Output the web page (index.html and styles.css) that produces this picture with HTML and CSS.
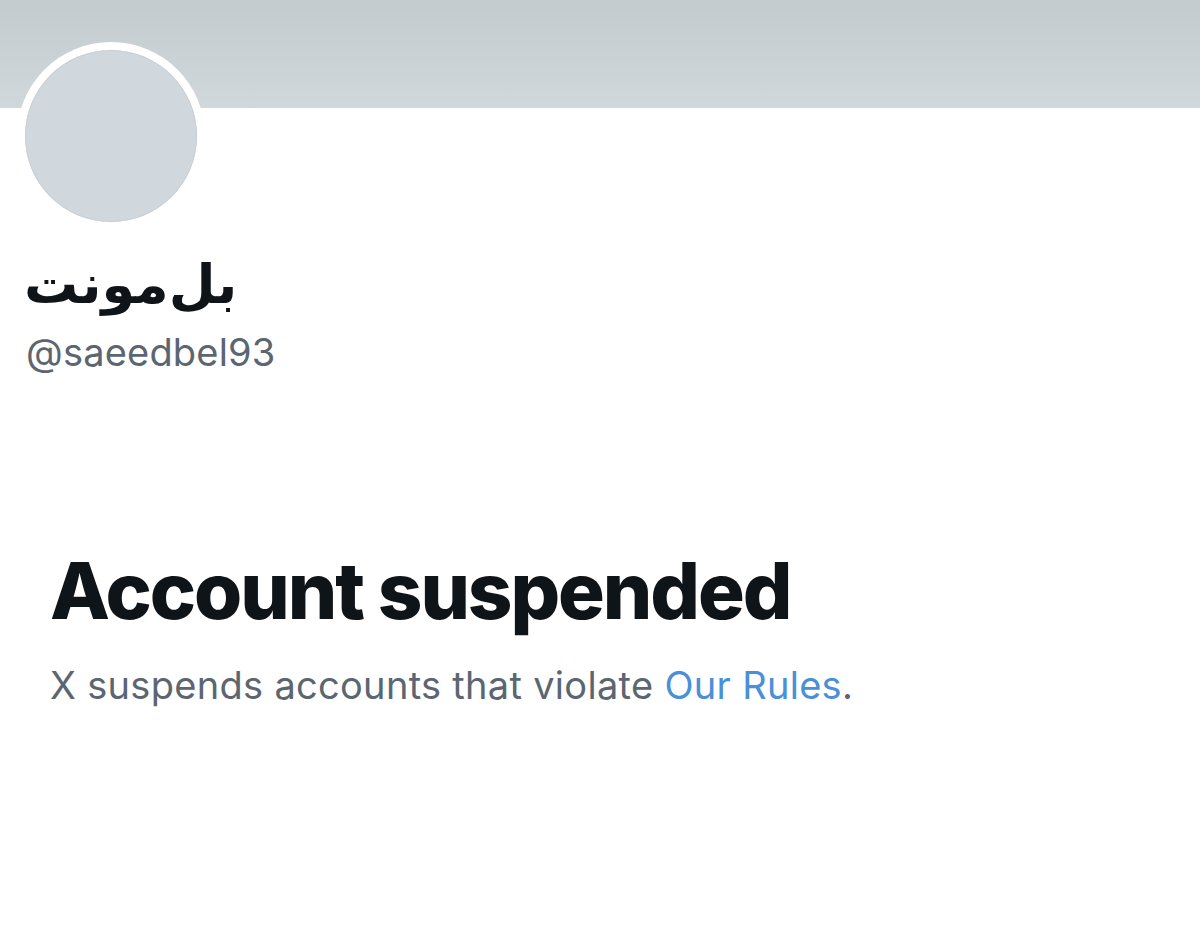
FILE: index.html
```html
<!DOCTYPE html>
<html lang="en">
<head>
<meta charset="utf-8">
<title>Account suspended</title>
<link rel="stylesheet" href="styles.css">
</head>
<body>
<div class="page">
  <div class="banner"></div>
  <div class="profile">
    <div class="avatar-ring"><div class="avatar"></div></div>
    <div class="name" dir="rtl" lang="fa">بل‌مونت</div>
    <div class="handle">@saeedbel93</div>
  </div>
  <div class="notice">
    <h1 class="title">Account suspended</h1>
    <p class="desc">X suspends accounts that violate <a class="link" href="#">Our Rules</a>.</p>
  </div>
</div>
</body>
</html>
```
FILE: styles.css
```css
html, body {
  margin: 0;
  padding: 0;
  background: #ffffff;
}
.page {
  width: 1200px;
  height: 925px;
  overflow: hidden;
  font-family: Inter, "Liberation Sans", sans-serif;
}
.banner {
  height: 108px;
  background: linear-gradient(180deg, #c4cbcf 0%, #d1d8dc 100%);
}
.profile {
  padding-left: 17px;
  display: flex;
  flex-direction: column;
  align-items: flex-start;
}
.avatar-ring {
  width: 188px;
  height: 188px;
  margin-top: -66px;
  border-radius: 50%;
  background: #ffffff;
  display: flex;
  align-items: center;
  justify-content: center;
}
.avatar {
  width: 172px;
  height: 172px;
  border-radius: 50%;
  background: #d1d8dd;
  box-shadow: inset 0 0 0 1px #c9d0d5;
}
.name {
  margin-top: 22px;
  margin-left: 7px;
  font-family: "DejaVu Sans", "Noto Sans", sans-serif;
  font-weight: 700;
  font-size: 54px;
  line-height: 66px;
  color: #0f1419;
}
.handle {
  margin-top: 11px;
  margin-left: 9px;
  font-size: 38px;
  line-height: 46px;
  color: #5b6671;
  letter-spacing: 0.2px;
}
.notice {
  padding-left: 50px;
  margin-top: 171px;
}
.title {
  margin: 0;
  font-size: 78px;
  line-height: 90px;
  font-weight: 800;
  letter-spacing: -2.1px;
  color: #0f1419;
}
.desc {
  margin: 26px 0 0;
  font-size: 38px;
  line-height: 46px;
  letter-spacing: 0.3px;
  color: #5b6671;
}
.link {
  color: #4a90d6;
  text-decoration: none;
}
```
